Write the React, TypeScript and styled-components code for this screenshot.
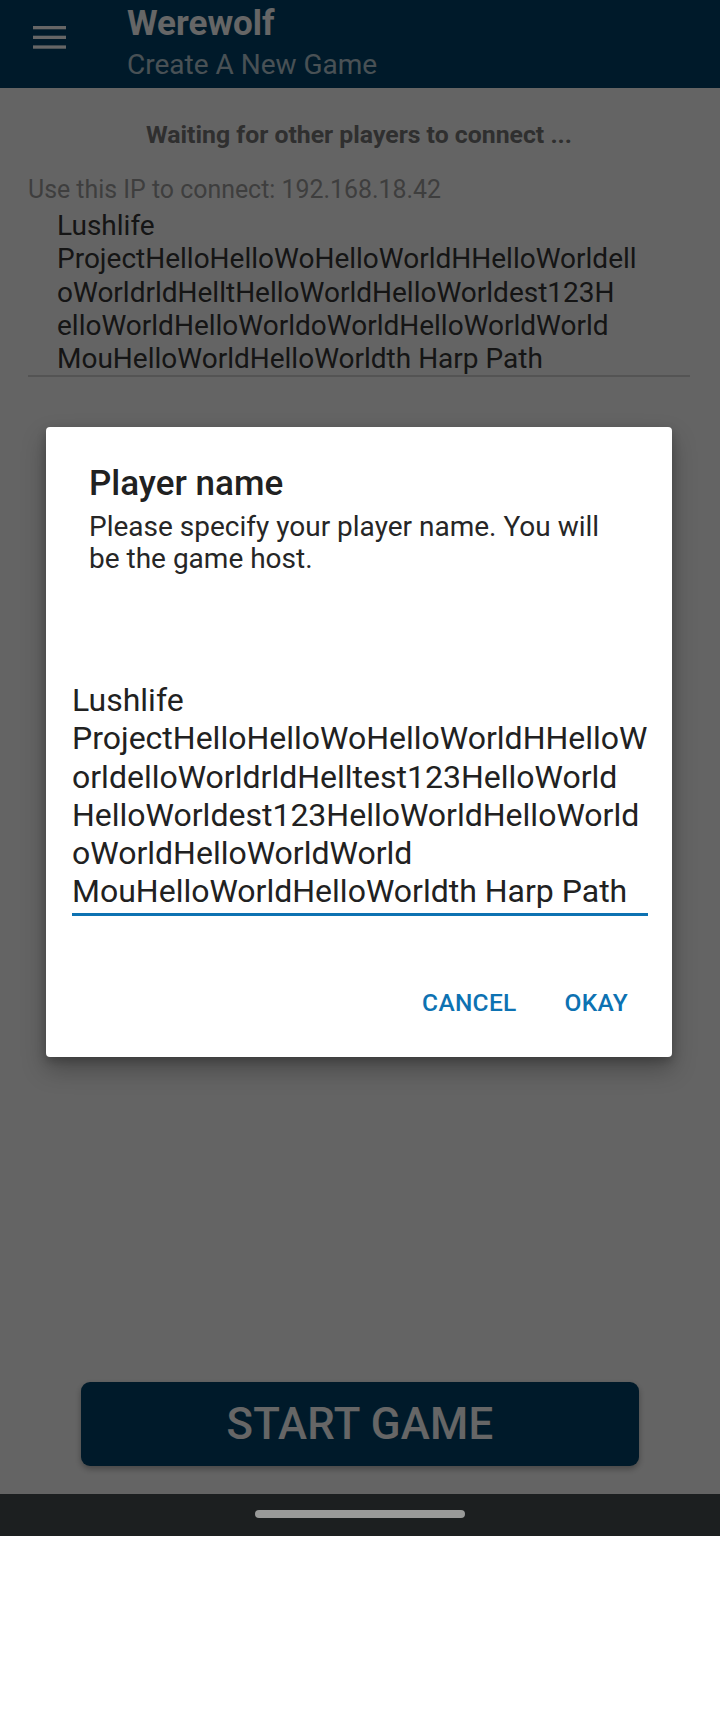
import React from "react";
import styled, { createGlobalStyle } from "styled-components";

const GlobalStyle = createGlobalStyle`
  html, body {
    margin: 0;
    padding: 0;
    background: #ffffff;
  }
  body {
    font-family: Roboto, "Noto Sans", "Liberation Sans", sans-serif;
    -webkit-font-smoothing: antialiased;
  }
  * { box-sizing: border-box; }
`;

const Screen = styled.div`
  width: 720px;
  height: 1536px;
  display: flex;
  flex-direction: column;
`;

const Content = styled.div`
  position: relative;
  height: 1494px;
  display: flex;
  flex-direction: column;
  background: #fafafa;
  overflow: hidden;
`;

const AppBar = styled.header`
  height: 88px;
  flex: none;
  display: flex;
  align-items: flex-start;
  background: #004369;
`;

const MenuButton = styled.button`
  width: 127px;
  height: 74px;
  padding: 26px 0 0 33px;
  border: 0;
  background: transparent;
  display: flex;
  align-items: flex-start;
  justify-content: flex-start;
`;

const TitleBlock = styled.div`
  display: flex;
  flex-direction: column;
  padding-top: 3px;
`;

const AppTitle = styled.h1`
  margin: 0;
  font-size: 35px;
  line-height: 41px;
  font-weight: 700;
  color: #ffffff;
  white-space: nowrap;
`;

const AppSubtitle = styled.div`
  margin-top: 5px;
  font-size: 28px;
  line-height: 32px;
  font-weight: 400;
  color: rgba(255, 255, 255, 0.72);
  white-space: nowrap;
`;

const Main = styled.main`
  flex: 1;
  display: flex;
  flex-direction: column;
  padding: 32px 30px 28px 28px;
`;

const Status = styled.div`
  text-align: center;
  font-size: 24.8px;
  line-height: 29px;
  font-weight: 700;
  color: #767676;
`;

const IpLabel = styled.div`
  margin-top: 26px;
  font-size: 24.9px;
  line-height: 29px;
  color: #9c9c9c;
  white-space: nowrap;
`;

const PlayerRow = styled.div`
  margin-top: 5px;
  padding-left: 29px;
  border-bottom: 2px solid #d2d2d2;
  font-size: 28px;
  line-height: 33.3px;
  color: #353535;
`;

const TextLine = styled.span`
  display: block;
  white-space: nowrap;
`;

const Spacer = styled.div`
  flex: 1;
`;

const StartButton = styled.button`
  align-self: center;
  width: 558px;
  height: 84px;
  margin-left: 2px;
  border: 0;
  border-radius: 9px;
  background: #004369;
  color: #ffffff;
  font-family: inherit;
  font-size: 43.7px;
  font-weight: 500;
  letter-spacing: 0.3px;
  box-shadow: 0 3px 6px rgba(0, 0, 0, 0.3);
  display: flex;
  align-items: center;
  justify-content: center;
`;

const Scrim = styled.div`
  position: absolute;
  inset: 0;
  background: rgba(0, 0, 0, 0.6);
  display: flex;
  align-items: flex-start;
  justify-content: flex-start;
  padding: 427px 0 0 46px;
`;

const Dialog = styled.div`
  width: 626px;
  height: 630px;
  background: #ffffff;
  border-radius: 4px;
  box-shadow: 0 12px 24px rgba(0, 0, 0, 0.28), 0 4px 10px rgba(0, 0, 0, 0.2);
  display: flex;
  flex-direction: column;
  padding: 36px 24px 39px 26px;
`;

const DialogTitle = styled.h2`
  margin: 0 0 0 17px;
  font-size: 35px;
  line-height: 41px;
  font-weight: 500;
  color: #212121;
`;

const DialogMessage = styled.p`
  margin: 7px 0 0 17px;
  font-size: 28px;
  line-height: 31.6px;
  color: #262626;
`;

const NameField = styled.div`
  margin-top: 107px;
  padding-bottom: 3px;
  border-bottom: 3px solid #0d72b2;
  font-size: 32px;
  line-height: 38.2px;
  color: #212121;
`;

const Actions = styled.div`
  margin-top: 72px;
  display: flex;
  justify-content: flex-end;
  gap: 20px;
  padding-right: 6px;
`;

const TextButton = styled.button`
  border: 0;
  background: transparent;
  padding: 0 14px;
  font-family: inherit;
  font-size: 24.5px;
  line-height: 29px;
  font-weight: 500;
  color: #0d72b2;
  letter-spacing: 0.3px;
`;

const NavBar = styled.div`
  height: 42px;
  flex: none;
  background: #1c1f20;
  display: flex;
  justify-content: center;
  padding-top: 16px;
`;

const HomeHandle = styled.div`
  width: 210px;
  height: 8px;
  border-radius: 4px;
  background: #999a99;
`;

const playerLines = [
  "Lushlife",
  "ProjectHelloHelloWoHelloWorldHHelloWorldell",
  "oWorldrldHelltHelloWorldHelloWorldest123H",
  "elloWorldHelloWorldoWorldHelloWorldWorld",
  "MouHelloWorldHelloWorldth Harp Path",
];

const nameLines = [
  "Lushlife",
  "ProjectHelloHelloWoHelloWorldHHelloW",
  "orldelloWorldrldHelltest123HelloWorld",
  "HelloWorldest123HelloWorldHelloWorld",
  "oWorldHelloWorldWorld",
  "MouHelloWorldHelloWorldth Harp Path",
];

function MenuIcon() {
  return (
    <svg width="33" height="23" viewBox="0 0 33 23" aria-hidden="true">
      <rect x="0" y="0" width="33" height="3.3" fill="#ffffff" />
      <rect x="0" y="9.7" width="33" height="3.3" fill="#ffffff" />
      <rect x="0" y="19.4" width="33" height="3.3" fill="#ffffff" />
    </svg>
  );
}

export default function App() {
  return (
    <>
      <GlobalStyle />
      <Screen>
        <Content>
          <AppBar>
            <MenuButton aria-label="Menu">
              <MenuIcon />
            </MenuButton>
            <TitleBlock>
              <AppTitle>Werewolf</AppTitle>
              <AppSubtitle>Create A New Game</AppSubtitle>
            </TitleBlock>
          </AppBar>
          <Main>
            <Status>Waiting for other players to connect ...</Status>
            <IpLabel>Use this IP to connect: 192.168.18.42</IpLabel>
            <PlayerRow>
              {playerLines.map((l, i) => (
                <TextLine key={i}>{l}</TextLine>
              ))}
            </PlayerRow>
            <Spacer />
            <StartButton>START GAME</StartButton>
          </Main>
          <Scrim>
            <Dialog role="dialog">
              <DialogTitle>Player name</DialogTitle>
              <DialogMessage>
                Please specify your player name. You will
                <br />
                be the game host.
              </DialogMessage>
              <NameField role="textbox">
                {nameLines.map((l, i) => (
                  <TextLine key={i}>{l}</TextLine>
                ))}
              </NameField>
              <Actions>
                <TextButton>CANCEL</TextButton>
                <TextButton>OKAY</TextButton>
              </Actions>
            </Dialog>
          </Scrim>
        </Content>
        <NavBar>
          <HomeHandle />
        </NavBar>
      </Screen>
    </>
  );
}
